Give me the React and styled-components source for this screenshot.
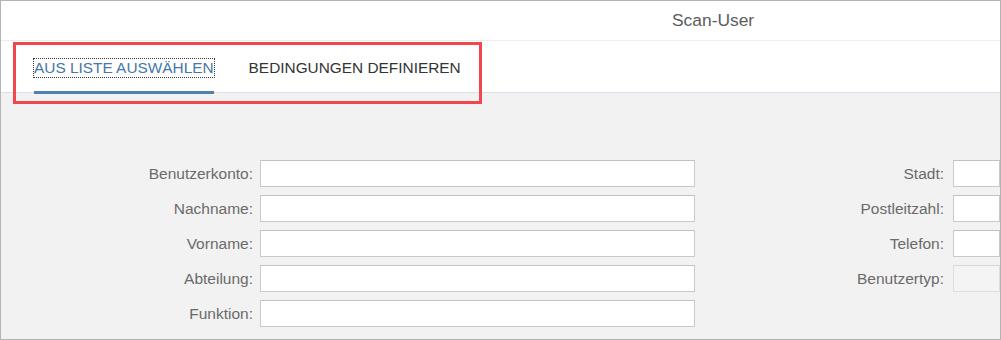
import React from 'react';
import styled, { createGlobalStyle } from 'styled-components';

const GlobalStyle = createGlobalStyle`
  html, body {
    margin: 0;
    padding: 0;
    background: #ffffff;
  }
  body {
    font-family: "Liberation Sans", Arial, sans-serif;
  }
`;

const Frame = styled.div`
  position: relative;
  width: 1001px;
  height: 340px;
  box-sizing: border-box;
  border: 1px solid #b4b4b4;
  background: #f2f2f2;
  overflow: hidden;
  display: flex;
  flex-direction: column;
`;

const Header = styled.div`
  height: 39px;
  flex: none;
  background: #ffffff;
  border-bottom: 1px solid #ededed;
  display: flex;
  align-items: center;
  padding-left: 671px;
`;

const Title = styled.div`
  font-size: 17.4px;
  color: #5c5c5c;
  white-space: nowrap;
`;

const TabBar = styled.div`
  height: 51px;
  flex: none;
  background: #ffffff;
  border-bottom: 1px solid #d6e3ef;
  display: flex;
  align-items: stretch;
  gap: 35px;
  padding-left: 33px;
`;

const Tab = styled.div`
  display: flex;
  align-items: center;
  box-sizing: border-box;
  padding-top: 3px;
  border-bottom: 3px solid ${p => (p.active ? '#4f80b0' : 'transparent')};
  margin-bottom: -2px;
  font-size: 15.4px;
  color: ${p => (p.active ? '#4677a8' : '#333333')};
  white-space: nowrap;
`;

const TabLabel = styled.span`
  line-height: 18px;
  outline: ${p => (p.focused ? '1px dotted #3a3a3a' : 'none')};
`;

const Callout = styled.div`
  position: absolute;
  left: 12px;
  top: 41px;
  width: 469px;
  height: 62px;
  box-sizing: border-box;
  border: 3px solid #f2454c;
  pointer-events: none;
`;

const Body = styled.div`
  flex: 1;
  display: flex;
  padding-top: 67px;
`;

const FieldColumn = styled.div`
  display: grid;
  grid-template-columns: ${p => p.columns};
  grid-auto-rows: 27px;
  row-gap: 8px;
  align-content: start;
  flex: ${p => (p.grow ? '1' : 'none')};
`;

const Label = styled.label`
  display: flex;
  align-items: center;
  justify-content: flex-end;
  padding-right: ${p => p.gap || 7}px;
  font-size: 15.5px;
  color: #6a6a6a;
  white-space: nowrap;
`;

const Input = styled.div`
  box-sizing: border-box;
  background: ${p => (p.disabled ? '#f4f4f4' : '#ffffff')};
  border: 1px solid ${p => (p.disabled ? '#dedede' : '#c9c9c9')};
  border-top-color: ${p => (p.disabled ? '#d8d8d8' : '#c2c2c2')};
`;

const leftFields = ['Benutzerkonto:', 'Nachname:', 'Vorname:', 'Abteilung:', 'Funktion:'];
const rightFields = [
  { label: 'Stadt:' },
  { label: 'Postleitzahl:' },
  { label: 'Telefon:' },
  { label: 'Benutzertyp:', disabled: true }
];

const App = () => (
  <>
    <GlobalStyle />
    <Frame>
      <Header>
        <Title>Scan-User</Title>
      </Header>
      <TabBar>
        <Tab active><TabLabel focused>AUS LISTE AUSWÄHLEN</TabLabel></Tab>
        <Tab><TabLabel>BEDINGUNGEN DEFINIEREN</TabLabel></Tab>
      </TabBar>
      <Body>
        <FieldColumn columns="259px 435px">
          {leftFields.map(label => (
            <React.Fragment key={label}>
              <Label>{label}</Label>
              <Input />
            </React.Fragment>
          ))}
        </FieldColumn>
        <FieldColumn columns="258px 1fr" grow>
          {rightFields.map(f => (
            <React.Fragment key={f.label}>
              <Label gap={9}>{f.label}</Label>
              <Input disabled={f.disabled} />
            </React.Fragment>
          ))}
        </FieldColumn>
      </Body>
      <Callout />
    </Frame>
  </>
);

export default App;
